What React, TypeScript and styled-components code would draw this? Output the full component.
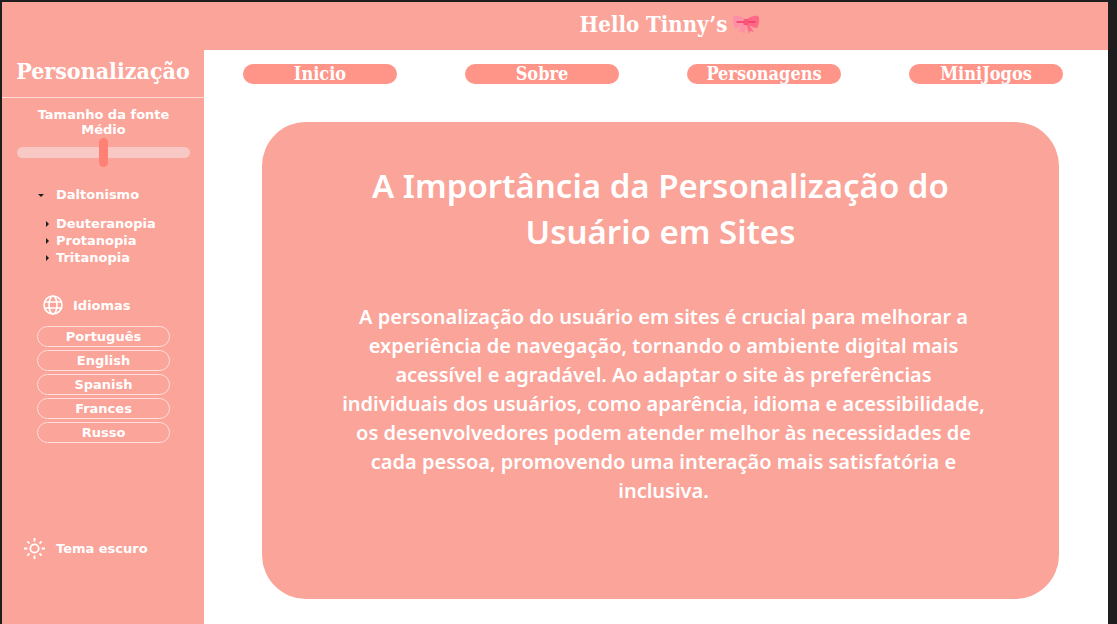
import React, { useState } from "react";
import styled, { createGlobalStyle } from "styled-components";

const display = `"DejaVu Serif Condensed", "DejaVu Serif", serif`;
const heavy = `"DejaVu Sans", "Liberation Sans", sans-serif`;
const reading = `"Noto Sans", "Open Sans", sans-serif`;

const GlobalStyle = createGlobalStyle`
  *, *::before, *::after { box-sizing: border-box; }
  body { margin: 0; background: #1e1e1e; color: #fff; }
  button { font: inherit; color: inherit; cursor: pointer; }
`;

const Frame = styled.div`
  display: flex;
  flex-direction: column;
  min-height: 100vh;
  padding: 2px 9px 0 2px;
  background: #1e1e1e;
`;

const Header = styled.header`
  display: flex;
  align-items: center;
  justify-content: center;
  gap: 5px;
  height: 48px;
  padding: 0 0 4px 230px;
  background: #faa49a;
`;

const Brand = styled.h1`
  margin: 0;
  font: 700 22px/32px ${display};
  white-space: nowrap;
`;

const Body = styled.div`
  display: flex;
  flex: 1;
`;

const Sidebar = styled.aside`
  flex: 0 0 202px;
  background: #faa49a;
  font: 700 13px/17px ${heavy};
  white-space: nowrap;
`;

const SidebarTitle = styled.h2`
  margin: 0;
  height: 48px;
  padding-top: 5px;
  border-bottom: 1px solid #fdd9d5;
  font: 700 23px/32px ${display};
  text-align: center;
`;

const FontSize = styled.div`
  display: flex;
  flex-direction: column;
  align-items: center;
  padding: 9px 14px 0 15px;
`;

const FontLabel = styled.label`
  line-height: 15px;
  text-align: center;
`;

const Slider = styled.input`
  appearance: none;
  width: 100%;
  height: 29px;
  margin: 1px 0 0;
  background: transparent;

  &::-webkit-slider-runnable-track {
    height: 11px;
    border-radius: 6px;
    background: #f8c8c4;
  }
  &::-webkit-slider-thumb {
    appearance: none;
    width: 9px;
    height: 29px;
    margin-top: -9px;
    border-radius: 5px;
    background: #ff8074;
  }
`;

const Vision = styled.details`
  margin: 19px 0 0 36px;
`;

const VisionSummary = styled.summary`
  display: flex;
  align-items: center;
  gap: 12px;
  list-style: none;
  cursor: pointer;
`;

const VisionList = styled.div`
  padding: 12px 0 0 6px;
`;

const Arrow = styled.svg`
  flex: none;
  width: 6px;
  height: 6px;
  fill: #1e1e1e;
`;

const TypeSummary = styled(VisionSummary)`
  gap: 6px;
`;

const Languages = styled.section`
  margin: 28px 34px 0 35px;
`;

const LanguagesTitle = styled.h3`
  display: flex;
  align-items: center;
  gap: 9px;
  margin: 0;
  padding-left: 5px;
  font: inherit;
`;

const LanguageList = styled.div`
  display: grid;
  gap: 3px;
  margin-top: 10px;
`;

const LanguageButton = styled.button`
  height: 21px;
  padding: 0;
  border: 1px solid #fde0dc;
  border-radius: 11px;
  background: transparent;
`;

const ThemeButton = styled.button`
  display: flex;
  align-items: center;
  gap: 10px;
  margin: 94px 0 40px 21px;
  padding: 0;
  border: 0;
  background: transparent;
`;

const Main = styled.main`
  flex: 1;
  min-width: 0;
  background: #fff;
`;

const Nav = styled.nav`
  display: flex;
  justify-content: space-between;
  padding: 14px 45px 0 39px;
`;

const NavLink = styled.a`
  flex: 0 0 154px;
  height: 20px;
  border-radius: 10px;
  background: #ff9488;
  color: #fff;
  font: 700 18px/20px ${display};
  text-align: center;
  text-decoration: none;
`;

const Card = styled.article`
  margin: 38px 49px 25px 58px;
  padding: 41px 40px 94px;
  border-radius: 44px;
  background: #faa49a;
  text-align: center;
  font-family: ${reading};
`;

const CardTitle = styled.h2`
  margin: 0;
  font-size: 33px;
  font-weight: 600;
  line-height: 46px;
`;

const CardText = styled.p`
  margin: 47px 0 0;
  padding-left: 6px;
  font-size: 20px;
  font-weight: 600;
  line-height: 29px;
`;

const Line = styled.span`
  display: block;
  white-space: nowrap;
`;

const Bow = () => (
  <svg width="28" height="20" viewBox="0 0 28 20" aria-hidden="true">
    <path d="M12 8 6 18l4-1 2 3 3-11z" fill="#ff8fa6" />
    <path d="m15 8 7 10-4-1-1 3-3-11z" fill="#ff6c8b" />
    <path d="M13 5C9 2 4 1 2 2 0 4 1 11 3 14c3 0 7-2 10-4z" fill="#ff8fa6" />
    <path d="M15 5c4-3 9-4 11-3 2 2 1 9-1 12-3 0-7-2-10-4z" fill="#ff6886" />
    <path d="M5 8h7M16 8h7" stroke="#ed3a62" strokeWidth="1.3" strokeLinecap="round" />
    <rect x="11.500" y="5" width="5" height="6" rx="1.500" fill="#f9557a" />
  </svg>
);

const Globe = () => (
  <svg width="22" height="22" viewBox="0 0 22 22" fill="none" stroke="#fff" strokeWidth="1.6" aria-hidden="true">
    <circle cx="11" cy="11" r="9" />
    <ellipse cx="11" cy="11" rx="4" ry="9" />
    <path d="M2.8 8h16.4M2.8 14h16.4" />
  </svg>
);

const Sun = () => (
  <svg width="23" height="23" viewBox="0 0 23 23" fill="none" stroke="#fff" strokeWidth="1.8" aria-hidden="true">
    <circle cx="11.5" cy="11.5" r="4.2" />
    <path d="M11.5 1v3.4M11.5 18.600v3.400M1 11.500h3.400M18.600 11.500H22M4.300 4.300l2.200 2.200M16.500 16.500l2.200 2.200M4.300 18.700l2.200-2.200M16.500 6.500l2.200-2.200" />
  </svg>
);

const navItems = ["Inicio", "Sobre", "Personagens", "MiniJogos"];
const visionTypes = ["Deuteranopia", "Protanopia", "Tritanopia"];
const languages = ["Português", "English", "Spanish", "Frances", "Russo"];
const titleLines = ["A Importância da Personalização do", "Usuário em Sites"];
const textLines = [
  "A personalização do usuário em sites é crucial para melhorar a",
  "experiência de navegação, tornando o ambiente digital mais",
  "acessível e agradável. Ao adaptar o site às preferências",
  "individuais dos usuários, como aparência, idioma e acessibilidade,",
  "os desenvolvedores podem atender melhor às necessidades de",
  "cada pessoa, promovendo uma interação mais satisfatória e",
  "inclusiva.",
];
const sizes = ["Pequeno", "Médio", "Grande"];

export default function App() {
  const [size, setSize] = useState(1);
  return (
    <>
      <GlobalStyle />
      <Frame>
        <Header>
          <Brand>Hello Tinny’s</Brand>
          <Bow />
        </Header>
        <Body>
          <Sidebar>
            <SidebarTitle>Personalização</SidebarTitle>
            <FontSize>
              <FontLabel htmlFor="font-size">
                Tamanho da fonte
                <br />
                {sizes[size]}
              </FontLabel>
              <Slider
                id="font-size"
                type="range"
                min={0}
                max={2}
                value={size}
                onChange={(e) => setSize(Number(e.target.value))}
              />
            </FontSize>
            <Vision open>
              <VisionSummary>
                <Arrow viewBox="0 0 6 6"><path d="M0 2h6L3 5z" /></Arrow>
                Daltonismo
              </VisionSummary>
              <VisionList>
                {visionTypes.map((name) => (
                  <details key={name}>
                    <TypeSummary>
                      <Arrow viewBox="0 0 6 6"><path d="M2 0v6l3-3z" /></Arrow>
                      {name}
                    </TypeSummary>
                  </details>
                ))}
              </VisionList>
            </Vision>
            <Languages>
              <LanguagesTitle>
                <Globe />
                Idiomas
              </LanguagesTitle>
              <LanguageList>
                {languages.map((name) => (
                  <LanguageButton key={name} type="button">{name}</LanguageButton>
                ))}
              </LanguageList>
            </Languages>
            <ThemeButton type="button">
              <Sun />
              Tema escuro
            </ThemeButton>
          </Sidebar>
          <Main>
            <Nav>
              {navItems.map((name) => (
                <NavLink key={name} href="#">{name}</NavLink>
              ))}
            </Nav>
            <Card>
              <CardTitle>
                {titleLines.map((line) => <Line key={line}>{line}</Line>)}
              </CardTitle>
              <CardText>
                {textLines.map((line) => <Line key={line}>{line}</Line>)}
              </CardText>
            </Card>
          </Main>
        </Body>
      </Frame>
    </>
  );
}
